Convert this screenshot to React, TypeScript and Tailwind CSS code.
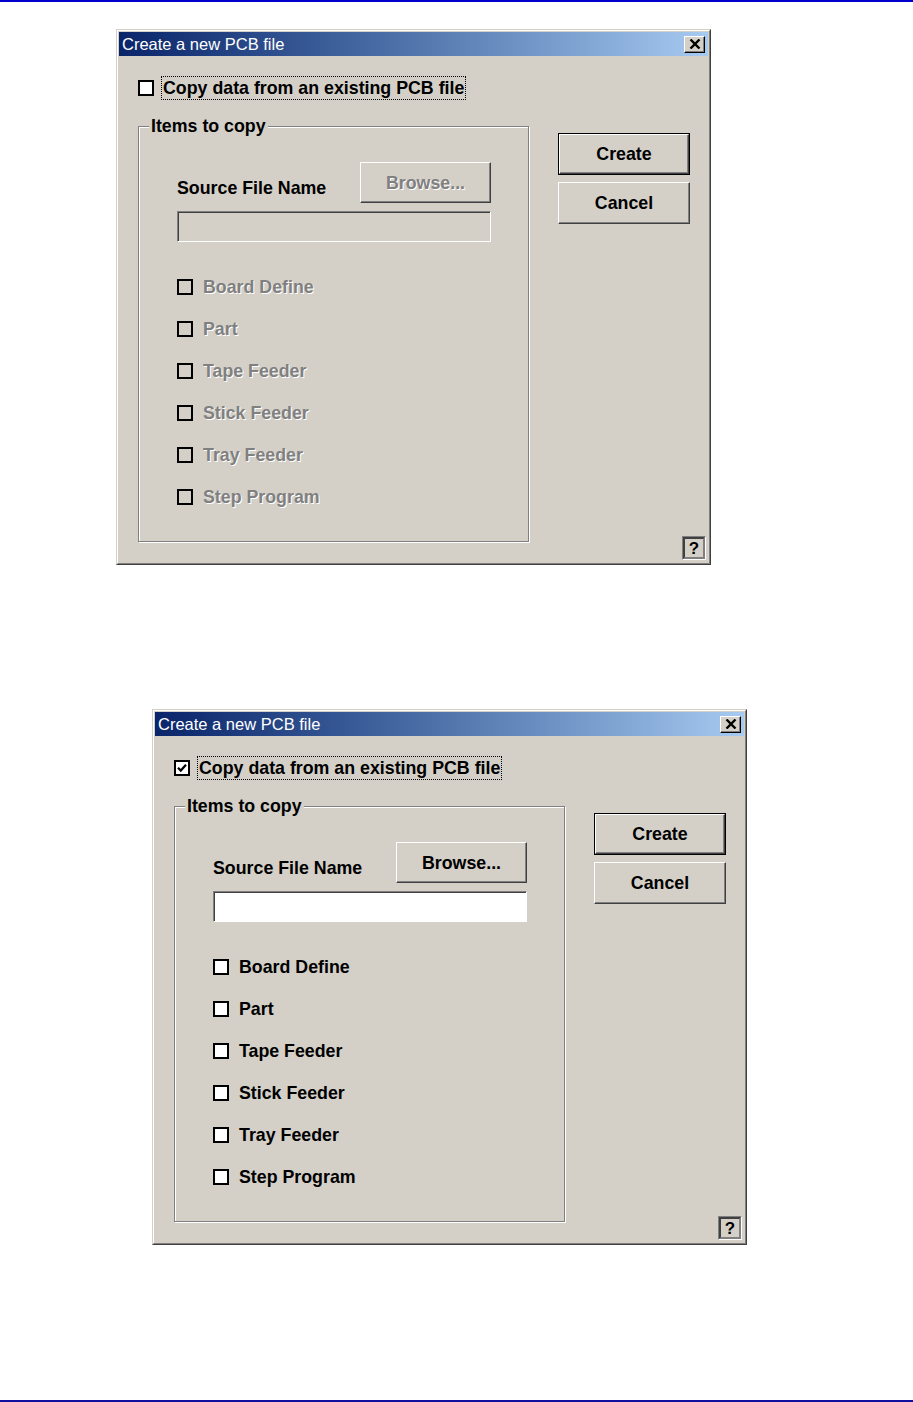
import React from 'react';

const FONT = "[font-family:'Liberation_Sans',Arial,sans-serif]";
const ITEMS = ['Board Define', 'Part', 'Tape Feeder', 'Stick Feeder', 'Tray Feeder', 'Step Program'];

function Label({ enabled, children }: { enabled: boolean; children: React.ReactNode }) {
  return (
    <span
      className={
        enabled
          ? 'leading-[22px] text-black'
          : 'leading-[22px] text-[#808080] [text-shadow:1px_1px_0_#fff]'
      }
    >
      {children}
    </span>
  );
}

function CheckBox({ checked, enabled }: { checked?: boolean; enabled: boolean }) {
  return (
    <span
      className={`flex h-4 w-4 shrink-0 items-center justify-center border-[2.5px] border-black ${
        enabled ? 'bg-white' : 'bg-[#d4d0c8]'
      }`}
    >
      {checked && (
        <svg width="10" height="10" viewBox="0 0 10 10">
          <path d="M1 4.8 L3.8 7.6 L9 1.8" fill="none" stroke="black" strokeWidth="2.2" />
        </svg>
      )}
    </span>
  );
}

function WinButton({
  children,
  isDefault,
  enabled = true,
  className = '',
}: {
  children: React.ReactNode;
  isDefault?: boolean;
  enabled?: boolean;
  className?: string;
}) {
  const face = (
    <div className="flex h-full w-full items-center justify-center border border-t-white border-l-white border-r-[#404040] border-b-[#404040] bg-[#d4d0c8] shadow-[inset_-1px_-1px_0_#808080]">
      <Label enabled={enabled}>{children}</Label>
    </div>
  );
  if (isDefault) {
    return <div className={`border border-black ${className}`}>{face}</div>;
  }
  return <div className={className}>{face}</div>;
}

function Dialog({ enabled }: { enabled: boolean }) {
  return (
    <div className="h-[536px] w-[595px] border border-t-[#d4d0c8] border-l-[#d4d0c8] border-r-[#404040] border-b-[#404040]">
      <div className="flex h-full w-full flex-col border border-t-white border-l-white border-r-[#808080] border-b-[#808080] bg-[#d4d0c8] p-[1px]">
        {/* title bar */}
        <div className="flex h-6 items-center justify-between bg-gradient-to-r from-[#0a246a] to-[#a6caf0] pl-[3px] pr-[3px]">
          <span className="text-[16.5px] leading-6 text-white">Create a new PCB file</span>
          <div className="flex h-[17px] w-[21px] items-center justify-center border border-t-white border-l-white border-r-black border-b-black bg-[#d4d0c8] shadow-[inset_-1px_-1px_0_#808080]">
            <svg width="12" height="10" viewBox="0 0 12 10">
              <path d="M1.5 0.5 L10.5 9.5 M10.5 0.5 L1.5 9.5" stroke="black" strokeWidth="2.4" />
            </svg>
          </div>
        </div>

        {/* body */}
        <div className="flex flex-1 pb-[2px] text-[17.8px] font-bold">
          <div className="flex flex-col pl-[19px] pt-[20px]">
            <div className="flex h-6 items-center gap-[7px]">
              <CheckBox checked={enabled} enabled />
              <span className="border border-dotted border-black px-[1px] leading-[22px]">
                Copy data from an existing PCB file
              </span>
            </div>

            <div className="relative mt-[26px] h-[416px] w-[391px] border border-[#808080] pl-[38px] pt-[35px] shadow-[inset_1px_1px_0_#fff,1px_1px_0_#fff]">
              <span className="absolute -top-[12px] left-[10px] bg-[#d4d0c8] px-[2px] leading-[22px]">
                Items to copy
              </span>
              <div className="flex w-[314px] items-end justify-between">
                <span className="mb-[4px] leading-[22px]">Source File Name</span>
                <WinButton enabled={enabled} className="h-[41px] w-[131px]">
                  Browse...
                </WinButton>
              </div>
              <div
                className={`mt-[8px] h-[31px] w-[314px] border border-t-[#808080] border-l-[#808080] border-r-white border-b-white shadow-[inset_1px_1px_0_#404040] ${
                  enabled ? 'bg-white' : 'bg-[#d4d0c8]'
                }`}
              />
              <div className="mt-[24px] flex flex-col">
                {ITEMS.map((item) => (
                  <div key={item} className="flex h-[42px] items-center gap-[10px]">
                    <CheckBox enabled={enabled} />
                    <Label enabled={enabled}>{item}</Label>
                  </div>
                ))}
              </div>
            </div>
          </div>

          <div className="ml-[29px] mr-[2px] flex flex-1 flex-col justify-between pt-[77px]">
            <div className="flex flex-col gap-[7px]">
              <WinButton isDefault className="h-[42px] w-[132px]">
                Create
              </WinButton>
              <WinButton className="h-[42px] w-[132px]">Cancel</WinButton>
            </div>
            <div className="self-end border border-t-[#808080] border-l-[#808080] border-r-white border-b-white">
              <div className="flex h-[22px] w-[22px] items-center justify-center border-2 border-t-[#404040] border-l-[#404040] border-r-[#808080] border-b-[#808080] bg-[#d4d0c8] text-[17px] leading-none">
                ?
              </div>
            </div>
          </div>
        </div>
      </div>
    </div>
  );
}

export default function App() {
  return (
    <div className={`flex h-[1402px] w-[913px] flex-col border-t-2 border-[#0000cc] bg-white ${FONT}`}>
      <div className="ml-[116px] mt-[27px]">
        <Dialog enabled={false} />
      </div>
      <div className="ml-[152px] mt-[144px]">
        <Dialog enabled />
      </div>
      <div className="mt-auto h-[2px] bg-[#1010a0]" />
    </div>
  );
}
